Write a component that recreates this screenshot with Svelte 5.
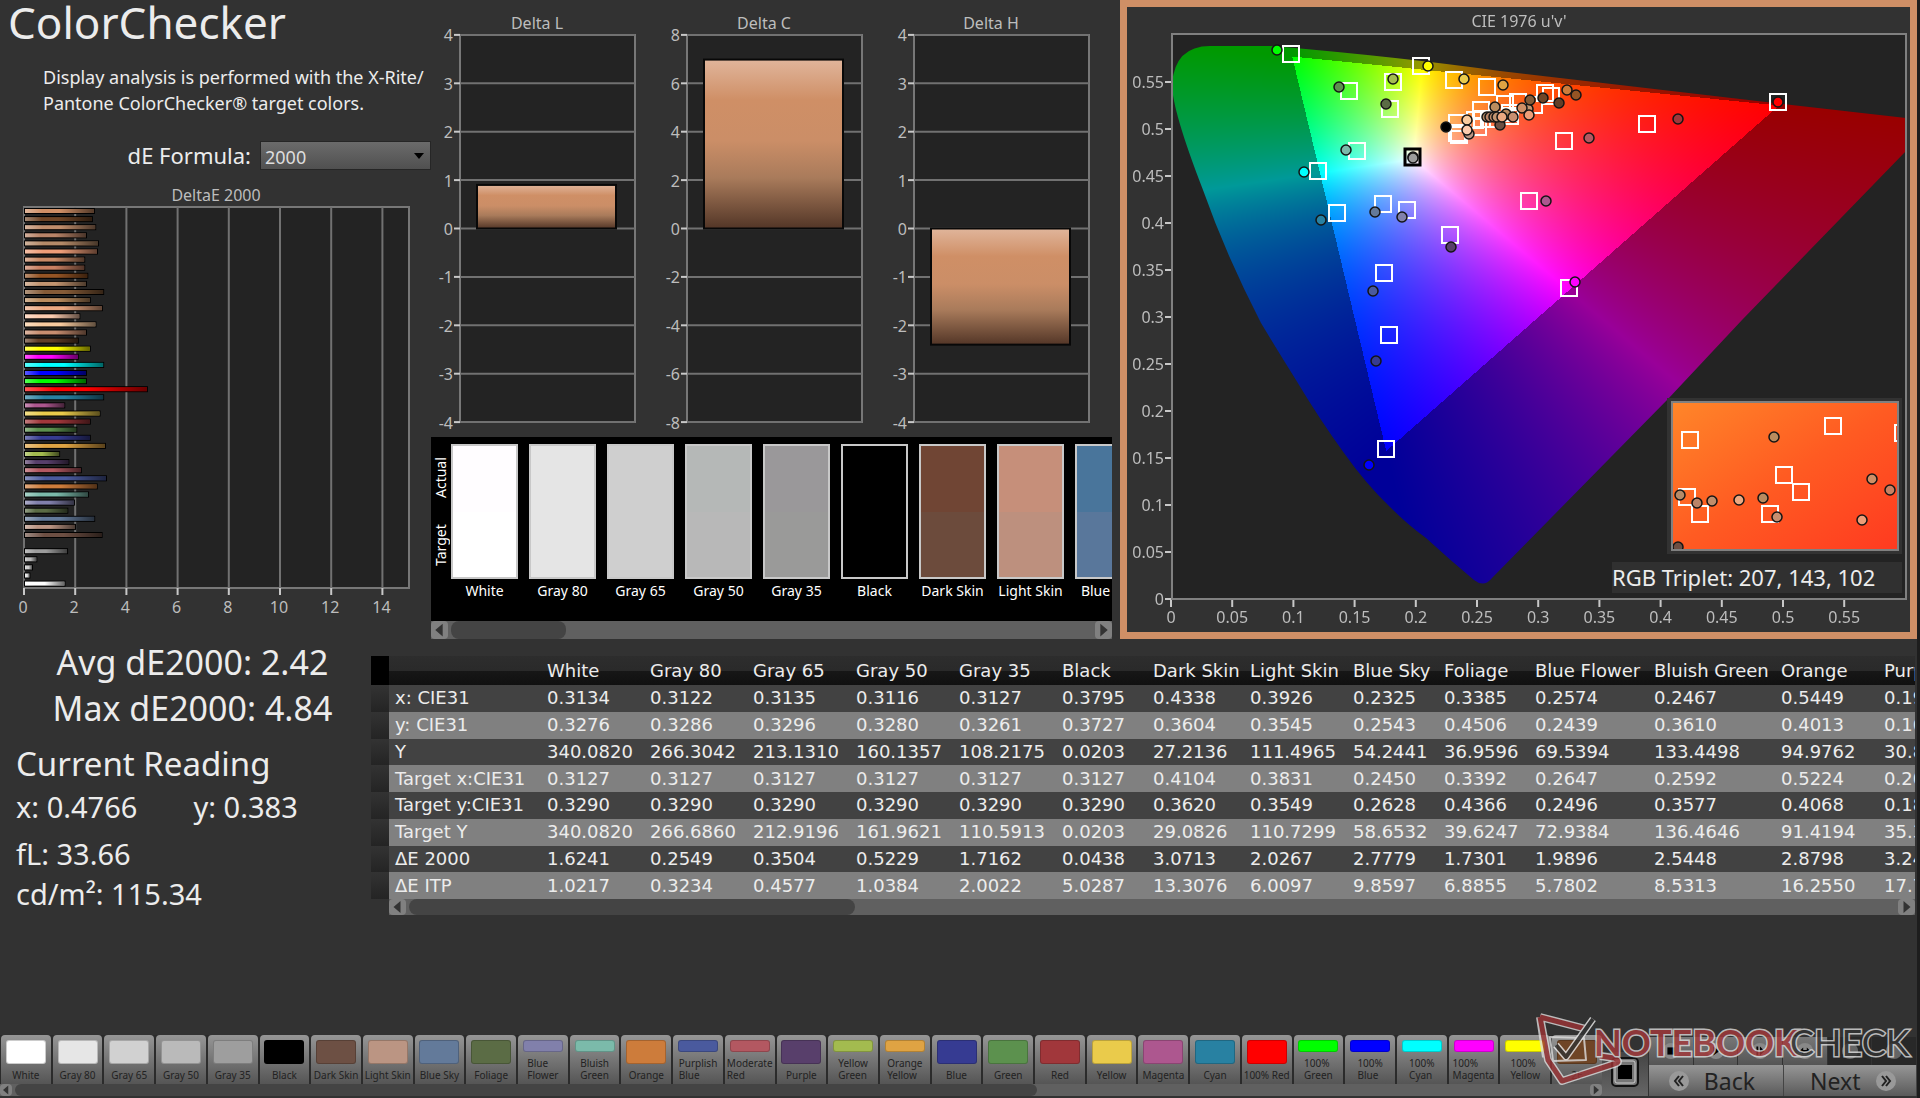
<script>
    import { onMount } from 'svelte';

    let canvas;

    const deltas = [
        { title: 'Delta L', step: 1, value: 0.9 },
        { title: 'Delta C', step: 2, value: 6.98 },
        { title: 'Delta H', step: 1, value: -2.4 }
    ];
    const levels = [4, 3, 2, 1, 0, -1, -2, -3, -4];

    // [deltaE, colour], top to bottom
    const deBars = [
        [2.77, '#cf8f66'], [2.69, '#6f4526'], [2.82, '#c08d6b'], [2.46, '#b98468'],
        [2.93, '#b48a68'], [2.89, '#ee9d78'], [2.39, '#c98a66'], [2.39, '#c98062'],
        [2.51, '#955424'], [2.46, '#c39570'], [3.13, '#855b37'], [2.61, '#ba8c5e'],
        [3.08, '#eca982'], [2.2, '#fccbae'], [2.83, '#f8cb9f'], [2.46, '#c88e70'],
        [2.14, '#623e27'], [2.61, '#ffff00'], [2.14, '#ff00ff'], [3.13, '#00ffff'],
        [2.46, '#0000ff'], [2.46, '#00ff00'], [4.84, '#ff0000'], [3.13, '#2881a2'],
        [1.61, '#ad578f'], [2.99, '#eacb4b'], [2.61, '#a1373b'], [2.08, '#5c914e'],
        [2.61, '#363b92'], [3.2, '#dfa343'], [1.41, '#a3bb4f'], [1.77, '#583f6b'],
        [2.26, '#b35861'], [3.24, '#4a5a9e'], [2.88, '#cd7c3b'], [2.54, '#7bbaaa'],
        [1.99, '#8180ab'], [1.73, '#5b6c45'], [2.78, '#637a9a'], [2.03, '#bb9583'],
        [3.07, '#6d4f43'], [0, '#000000'], [1.72, '#9c9c9c'], [0.52, '#b8b8b8'],
        [0.35, '#cfcfcf'], [0.25, '#e6e6e6'], [1.62, '#ffffff']
    ];

    const compare = [
        ['White', '#fffdff', '#ffffff'],
        ['Gray 80', '#e5e5e5', '#e5e5e5'],
        ['Gray 65', '#cfcfcf', '#cfcfcf'],
        ['Gray 50', '#b5b8b7', '#b8b8b8'],
        ['Gray 35', '#9a989a', '#9a9a99'],
        ['Black', '#000000', '#000000'],
        ['Dark Skin', '#704534', '#6c4b3c'],
        ['Light Skin', '#c68f7a', '#bd907e'],
        ['Blue Sky', '#49759b', '#59779b']
    ];

    const columns = ['White', 'Gray 80', 'Gray 65', 'Gray 50', 'Gray 35', 'Black', 'Dark Skin', 'Light Skin', 'Blue Sky', 'Foliage', 'Blue Flower', 'Bluish Green', 'Orange', 'Purplish Blue'];
    const rows = [
        ['x: CIE31', '0.3134', '0.3122', '0.3135', '0.3116', '0.3127', '0.3795', '0.4338', '0.3926', '0.2325', '0.3385', '0.2574', '0.2467', '0.5449', '0.19'],
        ['y: CIE31', '0.3276', '0.3286', '0.3296', '0.3280', '0.3261', '0.3727', '0.3604', '0.3545', '0.2543', '0.4506', '0.2439', '0.3610', '0.4013', '0.16'],
        ['Y', '340.0820', '266.3042', '213.1310', '160.1357', '108.2175', '0.0203', '27.2136', '111.4965', '54.2441', '36.9596', '69.5394', '133.4498', '94.9762', '30.8'],
        ['Target x:CIE31', '0.3127', '0.3127', '0.3127', '0.3127', '0.3127', '0.3127', '0.4104', '0.3831', '0.2450', '0.3392', '0.2647', '0.2592', '0.5224', '0.20'],
        ['Target y:CIE31', '0.3290', '0.3290', '0.3290', '0.3290', '0.3290', '0.3290', '0.3620', '0.3549', '0.2628', '0.4366', '0.2496', '0.3577', '0.4068', '0.18'],
        ['Target Y', '340.0820', '266.6860', '212.9196', '161.9621', '110.5913', '0.0203', '29.0826', '110.7299', '58.6532', '39.6247', '72.9384', '136.4646', '91.4194', '35.3'],
        ['ΔE 2000', '1.6241', '0.2549', '0.3504', '0.5229', '1.7162', '0.0438', '3.0713', '2.0267', '2.7779', '1.7301', '1.9896', '2.5448', '2.8798', '3.24'],
        ['ΔE ITP', '1.0217', '0.3234', '0.4577', '1.0384', '2.0022', '5.0287', '13.3076', '6.0097', '9.8597', '6.8855', '5.7802', '8.5313', '16.2550', '17.7']
    ];

    const patches = [
        ['White', '#ffffff'], ['Gray 80', '#e6e6e6'], ['Gray 65', '#d1d1d1'], ['Gray 50', '#bababa'],
        ['Gray 35', '#9e9e9e'], ['Black', '#000000'], ['Dark Skin', '#6d5044'], ['Light Skin', '#bb9583'],
        ['Blue Sky', '#637a9a'], ['Foliage', '#5b6c45'], ['Blue Flower', '#8180ab'], ['Bluish Green', '#7bbaaa'],
        ['Orange', '#cd7c3b'], ['Purplish Blue', '#4a5a9e'], ['Moderate Red', '#b35861'], ['Purple', '#583f6b'],
        ['Yellow Green', '#a3bb4f'], ['Orange Yellow', '#dfa343'], ['Blue', '#363b92'], ['Green', '#5c914e'],
        ['Red', '#a1373b'], ['Yellow', '#eacb4b'], ['Magenta', '#ad578f'], ['Cyan', '#2881a2'],
        ['100% Red', '#ff0000'], ['100% Green', '#00ff00'], ['100% Blue', '#0000ff'], ['100% Cyan', '#00ffff'],
        ['100% Magenta', '#ff00ff'], ['100% Yellow', '#ffff00'], ['2E', '#6f4526']
    ];
    const twoLines = (name) => name.includes(' ') && !/Gray|Skin|Sky|100% Red/.test(name);

    // chart units: 1224 px per u', 940 px per v'
    const ox = 1171;
    const oy = 599;
    const ticks = Array.from({ length: 12 }, (_, i) => i * 0.05);

    const targets = [
        [1291, 54], [1349, 91], [1393, 82], [1421, 66], [1454, 80], [1487, 87], [1390, 109],
        [1357, 151], [1318, 171], [1337, 213], [1383, 204], [1407, 210], [1450, 235], [1384, 273],
        [1389, 335], [1386, 449], [1457, 123], [1457, 133], [1459, 135], [1481, 110], [1475, 120],
        [1482, 119], [1478, 127], [1489, 119], [1505, 104], [1518, 102], [1510, 113], [1510, 116],
        [1545, 93], [1551, 96], [1534, 105], [1564, 141], [1647, 124], [1778, 102], [1529, 201], [1569, 288]
    ];
    const readings = [
        [1277, 50, '#00ff00'], [1339, 87, '#5c914e'], [1393, 79, '#a3bb4f'], [1428, 66, '#ffff00'],
        [1464, 79, '#eacb4b'], [1503, 85, '#dfa343'], [1386, 104, '#5b6c45'], [1446, 127, '#000000'],
        [1467, 120, '#f8cb9f'], [1469, 134, '#bb9583'], [1467, 130, '#fccbae'], [1495, 107, '#ba8c5e'],
        [1500, 125, '#6d4f43'], [1487, 117, '#b48a68'], [1490, 117, '#b98468'], [1494, 117, '#c08d6b'],
        [1497, 117, '#c39570'], [1506, 114, '#b98a5f'], [1502, 117, '#eca982'], [1513, 117, '#c88e70'],
        [1528, 109, '#c39570'], [1530, 100, '#855b37'], [1522, 108, '#cf8f66'], [1529, 115, '#ee9d78'],
        [1543, 98, '#6f4526'], [1559, 103, '#623e27'], [1567, 90, '#cd7c3b'], [1576, 95, '#955424'],
        [1589, 138, '#b35861'], [1678, 119, '#a1373b'], [1778, 102, '#ff0000'], [1546, 201, '#ad578f'],
        [1575, 282, '#ff00ff'], [1346, 150, '#7bbaaa'], [1304, 172, '#00ffff'], [1321, 220, '#2881a2'],
        [1375, 212, '#637a9a'], [1402, 217, '#8180ab'], [1451, 247, '#583f6b'], [1373, 291, '#4a5a9e'],
        [1376, 361, '#363b92'], [1369, 465, '#0000ff'], [1413, 157, '#8c8c8c'], [1413, 158, '#9c9c9c']
    ];
    const insetTargets = [[1690, 440], [1833, 426], [1903, 433], [1784, 475], [1801, 492], [1687, 497], [1700, 514], [1770, 514]];
    const insetReadings = [
        [1774, 437, '#ba8c5e'], [1872, 479, '#cf8f66'], [1890, 490, '#c98062'], [1680, 495, '#b48a68'],
        [1697, 503, '#b98468'], [1712, 501, '#c08d6b'], [1739, 500, '#eca982'], [1763, 498, '#b98a5f'],
        [1777, 517, '#c88e70'], [1862, 520, '#ee9d78'], [1678, 547, '#6d4f43']
    ];

    const locus = 'M1210 46 H1272 Q1400 57 1500 71 L1783 104 L1906 118 V151 L1742 320 L1668 399 L1492 578 Q1484 588 1474 580 Q1450 560 1426 538 Q1408 525 1390 507 Q1366 484 1344 453 Q1320 420 1296 380 Q1276 348 1261 323 Q1226 255 1203 190 Q1172 110 1172 84 Q1175 46 1210 46 Z';

    // Fills the u'v' diagram, dimmed outside the P3 triangle
    onMount(() => {
        const w = canvas.width;
        const h = canvas.height;
        const ctx = canvas.getContext('2d');
        const img = ctx.createImageData(w, h);
        for (let py = 0; py < h; py++) {
            for (let px = 0; px < w; px++) {
                const u = (px + 1127 - ox) / 1224;
                const v = Math.max((oy - py - 7) / 940, 0.005);
                const X = (9 * u) / (4 * v);
                const Z = (12 - 3 * u - 20 * v) / (4 * v);
                const rgb = [
                    2.4935 * X - 0.9314 - 0.4027 * Z,
                    -0.8295 * X + 1.7627 + 0.0236 * Z,
                    0.0358 * X - 0.0762 + 0.9569 * Z
                ];
                const k = 255 / Math.max(...rgb) * (Math.min(...rgb) < 0 ? 0.6 : 1);
                const i = (py * w + px) * 4;
                img.data[i] = Math.max(rgb[0], 0) * k;
                img.data[i + 1] = Math.max(rgb[1], 0) * k;
                img.data[i + 2] = Math.max(rgb[2], 0) * k;
                img.data[i + 3] = 255;
            }
        }
        ctx.putImageData(img, 0, 0);
        ctx.globalCompositeOperation = 'destination-in';
        ctx.translate(-1127, -7);
        ctx.fill(new Path2D(locus));
    });
</script>

{#snippet scrollbar(size)}
    <div class="scrollbar">
        <button aria-label="Scroll left"><svg viewBox="0 0 16 16"><path d="M11 2v12L4 8z" /></svg></button>
        <div class="track"><div class="thumb" style="width: {size}%"></div></div>
        <button aria-label="Scroll right"><svg viewBox="0 0 16 16"><path d="M5 2v12l7-6z" /></svg></button>
    </div>
{/snippet}

<main>
    <div class="top">
        <section class="left">
            <h1>ColorChecker</h1>
            <p class="intro">Display analysis is performed with the X-Rite/<br />Pantone ColorChecker® target colors.</p>
            <div class="formula">
                <label for="formula">dE Formula:</label>
                <div class="select">
                    <select id="formula"><option>2000</option></select>
                    <svg viewBox="0 0 12 8"><path d="M1 1h10L6 7z" /></svg>
                </div>
            </div>
            <svg class="chart" viewBox="0 170 431 450">
                <defs>
                    <linearGradient id="shineX">
                        <stop offset="0" stop-color="#fff" stop-opacity=".35" />
                        <stop offset=".25" stop-color="#fff" stop-opacity="0" />
                        <stop offset=".5" stop-color="#000" stop-opacity="0" />
                        <stop offset="1" stop-color="#000" stop-opacity=".6" />
                    </linearGradient>
                </defs>
                <text x="216" y="201" text-anchor="middle">DeltaE 2000</text>
                <rect class="plot" x="24" y="207" width="385" height="381" />
                {#each [0, 2, 4, 6, 8, 10, 12, 14] as n}
                    <path class="grid" d="M{24 + n * 25.6} 207V588" />
                    <path class="tick" d="M{24 + n * 25.6} 588v7" />
                    <text x={23 + n * 25.6} y="613" text-anchor="middle">{n}</text>
                {/each}
                {#each deBars as [value, color], i}
                    {#if value}
                        <rect x="24" y={208 + i * 8.1} width={value * 25.6} height="6" fill="#000" />
                        <rect x="25" y={209 + i * 8.1} width={value * 25.6 - 2} height="4" fill={color} />
                        <rect x="25" y={209 + i * 8.1} width={value * 25.6 - 2} height="4" fill="url(#shineX)" />
                    {/if}
                {/each}
            </svg>
        </section>

        <section class="middle">
            <div class="deltas">
                {#each deltas as { title, step, value }}
                    <svg class="chart" viewBox="0 0 227 437">
                        <defs>
                            <linearGradient id="copper" x2="0" y2="1">
                                <stop offset="0" stop-color="#e0b59b" />
                                <stop offset=".24" stop-color="#cf8f66" />
                                <stop offset=".48" stop-color="#cb8e67" />
                                <stop offset=".7" stop-color="#a97b5b" />
                                <stop offset="1" stop-color="#533627" />
                            </linearGradient>
                        </defs>
                        <text x="103" y="29" text-anchor="middle">{title}</text>
                        <rect class="plot" x="26" y="35" width="175" height="387" />
                        {#each levels as n}
                            <path class="grid" d="M26 {228.5 - n * 48.4}H201" />
                            <path class="tick" d="M20 {228.5 - n * 48.4}h6" />
                            <text x="19" y={235 - n * 48.4} text-anchor="end">{n * step}</text>
                        {/each}
                        <rect
                            class="bar"
                            x="43"
                            y={228.5 - Math.max(value / step, 0) * 48.4}
                            width="139"
                            height={Math.abs(value / step) * 48.4}
                        />
                    </svg>
                {/each}
            </div>
            <div class="compare">
                <div class="sides"><span>Actual</span><span>Target</span></div>
                {#each compare as [name, actual, target]}
                    <figure>
                        <div class="pair">
                            <div style="background: {actual}"></div>
                            <div style="background: {target}"></div>
                        </div>
                        <figcaption>{name}</figcaption>
                    </figure>
                {/each}
            </div>
            {@render scrollbar(18)}
        </section>

        <section class="cie">
            <canvas bind:this={canvas} width="783" height="625"></canvas>
            <svg class="chart" viewBox="1127 7 783 625">
                <defs>
                    <linearGradient id="hot" x2="1" y2="1">
                        <stop offset="0" stop-color="#ff8629" />
                        <stop offset=".5" stop-color="#ff5b22" />
                        <stop offset="1" stop-color="#ff3a20" />
                    </linearGradient>
                    <clipPath id="insetClip"><rect x="1672" y="402" width="226" height="148" /></clipPath>
                </defs>
                <text x="1519" y="27" text-anchor="middle">CIE 1976 u'v'</text>
                <rect class="frame" x="1172" y="34" width="734" height="565" />
                {#each ticks as t}
                    <path class="tick" d="M{ox + t * 1224} 600v7M1165 {oy - t * 940}h6" />
                    <text x={ox + t * 1224} y="623" text-anchor="middle">{+t.toFixed(2)}</text>
                    <text x="1164" y={oy + 6 - t * 940} text-anchor="end">{+t.toFixed(2)}</text>
                {/each}
                {#each targets as [x, y]}
                    <rect class="target" x={x - 8} y={y - 8} width="16" height="16" />
                {/each}
                <rect class="target white-point" x="1405" y="149" width="15" height="16" />
                {#each readings as [x, y, color]}
                    <circle cx={x} cy={y} r="5" fill={color} />
                {/each}
                <rect x="1667" y="398" width="235" height="156" fill="#323232" />
                <rect x="1672" y="402" width="226" height="148" fill="url(#hot)" />
                <g clip-path="url(#insetClip)">
                    {#each insetTargets as [x, y]}
                        <rect class="target" x={x - 8} y={y - 8} width="16" height="16" />
                    {/each}
                    {#each insetReadings as [x, y, color]}
                        <circle cx={x} cy={y} r="5" fill={color} />
                    {/each}
                </g>
                <rect class="frame" x="1672" y="402" width="226" height="148" />
                <rect x="1612" y="562" width="290" height="31" fill="#303030" />
                <text class="triplet" x="1612" y="586">RGB Triplet: 207, 143, 102</text>
            </svg>
        </section>
    </div>

    <div class="lower">
        <section class="stats">
            <p class="big">Avg dE2000: 2.42</p>
            <p class="big">Max dE2000: 4.84</p>
            <h2>Current Reading</h2>
            <div class="xy"><span>x: 0.4766</span><span>y: 0.383</span></div>
            <p class="fl">fL: 33.66</p>
            <p>cd/m²: 115.34</p>
        </section>

        <section class="data">
            <table>
                <colgroup>
                    <col class="w18" /><col class="w152" />
                    <col class="w103" /><col class="w103" /><col class="w103" /><col class="w103" /><col class="w103" />
                    <col class="w91" /><col class="w97" /><col class="w103" /><col class="w91" /><col class="w91" />
                    <col class="w119" /><col class="w127" /><col class="w103" /><col />
                </colgroup>
                <thead>
                    <tr>
                        <td class="strip"></td>
                        <th></th>
                        {#each columns as name}<th scope="col">{name}</th>{/each}
                    </tr>
                </thead>
                <tbody>
                    {#each rows as [name, ...values]}
                        <tr>
                            <td class="strip"></td>
                            <th scope="row">{name}</th>
                            {#each values as value}<td>{value}</td>{/each}
                        </tr>
                    {/each}
                </tbody>
            </table>
            <div class="data-scroll">{@render scrollbar(30)}</div>
        </section>
    </div>

    <footer>
        <div class="patches">
            <div class="strip-row">
                {#each patches as [name, color]}
                    <button class="patch">
                        <span class="chip" style="background-color: {color}"></span>
                        <span class="name" class:two={twoLines(name)}>{name}</span>
                    </button>
                {/each}
            </div>
            <div class="mini">{@render scrollbar(65)}</div>
        </div>
        <button class="stop" aria-label="Stop">
            <svg viewBox="0 0 30 32"><rect x="2" y="2" width="26" height="28" rx="4" fill="#777" stroke="#111" stroke-width="2" /><rect x="5" y="5" width="20" height="22" rx="2" fill="none" stroke="#ccc" /><rect x="8" y="9" width="14" height="14" fill="#000" /></svg>
        </button>
        <div class="nav">
            <div class="tools">
                <button aria-label="Record"><svg viewBox="0 0 20 20"><circle cx="10" cy="10" r="9" /><path d="M6 6h8v8H6z" /></svg></button>
                <button aria-label="Play"><svg viewBox="0 0 20 20"><circle cx="10" cy="10" r="9" /><path d="M7 5l7 5-7 5z" /></svg></button>
                <button aria-label="Step"><svg viewBox="0 0 20 20"><circle cx="10" cy="10" r="9" /><path d="M6 5h2v10H6zM10 5l5 5-5 5z" /></svg></button>
                <button aria-label="Loop"><svg viewBox="0 0 20 20"><circle cx="10" cy="10" r="9" /><path d="M4 10l4-4v3h4V6l4 4-4 4v-3H8v3z" /></svg></button>
                <button class="off" aria-label="Previous"><svg viewBox="0 0 20 20"><circle cx="10" cy="10" r="9" /></svg></button>
                <button class="off" aria-label="Following"><svg viewBox="0 0 20 20"><circle cx="10" cy="10" r="9" /></svg></button>
            </div>
            <div class="steps">
                <button><svg viewBox="0 0 20 20"><circle cx="10" cy="10" r="10" /><path d="M10 5l-4 5 4 5M14 5l-4 5 4 5" /></svg>Back</button>
                <button>Next<svg viewBox="0 0 20 20"><circle cx="10" cy="10" r="10" /><path d="M6 5l4 5-4 5M10 5l4 5-4 5" /></svg></button>
            </div>
        </div>
        <svg class="brand" viewBox="0 0 385 80">
            <g fill="none" stroke-linejoin="round">
                <path d="M10 7L16 47M10 7L56 19M10 7L18 50L32 71L84 54Q92 52 84 48L70 46" stroke="#ddd" stroke-width="8" />
                <path d="M10 7L56 19M10 7L18 50L32 71L84 54Q92 52 84 48L70 46" stroke="#9c3335" stroke-width="5" />
                <path d="M20 27L54 28L56 50L23 51Z" stroke="#ddd" stroke-width="2" />
                <path d="M26 35L36 47L63 9" stroke="#eee" stroke-width="7" />
                <path d="M26 35L36 47L63 9" stroke="#333" stroke-width="4" />
            </g>
            <text x="64" y="46" class="note">NOTEBOOK</text>
            <text x="260" y="46" class="check">CHECK</text>
        </svg>
    </footer>
</main>

<style>
    :global(body) {
        background: #323232;
    }

    main {
        min-height: 100vh;
        display: flex;
        flex-direction: column;
        box-sizing: border-box;
        overflow: hidden;
        background: #323232;
        border-right: 3px solid #1d1d1d;
        color: #ececec;
        font-family: "Noto Sans", sans-serif;
    }

    h1, h2, p, figure {
        margin: 0;
        font-weight: 400;
    }

    button {
        padding: 0;
        border: 0;
        font-family: inherit;
        color: #222;
    }

    .top {
        display: grid;
        grid-template-columns: 431fr 689fr 797fr;
        align-items: start;
    }

    .top > section {
        min-width: 0;
    }

    h1 {
        padding-left: 8px;
        font-size: 44px;
        line-height: 44px;
    }

    .intro {
        margin: 20px 0 25px 43px;
        font-size: 18px;
        line-height: 26px;
        white-space: nowrap;
    }

    .formula {
        display: flex;
        justify-content: flex-end;
        gap: 9px;
        font-size: 22px;
        line-height: 29px;
    }

    .select {
        position: relative;
        width: 171px;
    }

    .select svg {
        position: absolute;
        right: 6px;
        top: 11px;
        width: 12px;
    }

    select {
        width: 100%;
        height: 29px;
        padding: 3px 0 0 4px;
        appearance: none;
        border: 1px solid #262626;
        border-radius: 0;
        background: linear-gradient(#6b6b6b, #505050);
        color: #ddd;
        font-family: inherit;
        font-size: 18px;
    }

    .chart {
        display: block;
        width: 100%;
        font-size: 16px;
        fill: #bdbdbd;
    }

    .plot {
        fill: #232323;
        stroke: #777;
        stroke-width: 2;
    }

    .frame {
        fill: none;
        stroke: #808080;
        stroke-width: 2;
    }

    .grid {
        stroke: #717171;
        stroke-width: 2;
    }

    .tick {
        stroke: #c8c8c8;
        stroke-width: 2;
    }

    .bar {
        fill: url(#copper);
        stroke: #080808;
        stroke-width: 2;
    }

    .middle {
        padding-right: 8px;
    }

    .deltas {
        display: grid;
        grid-template-columns: repeat(3, 1fr);
        margin-right: -8px;
        padding: 0 5px 0 3px;
    }

    .compare {
        display: flex;
        gap: 11px;
        height: 184px;
        overflow: hidden;
        background: #000;
        color: #fff;
    }

    .sides {
        display: flex;
        flex-direction: row-reverse;
        justify-content: space-around;
        align-items: center;
        flex: none;
        width: 20px;
        height: 135px;
        margin: 7px -11px 0 0;
        writing-mode: vertical-rl;
        transform: rotate(180deg);
        font-size: 14px;
        line-height: 20px;
    }

    figure {
        flex: none;
        width: 67px;
        padding-top: 7px;
    }

    .pair {
        height: 135px;
        box-sizing: border-box;
        border: 2px solid #c8c8c8;
        display: grid;
    }

    figcaption {
        font-size: 14px;
        line-height: 24px;
        text-align: center;
        white-space: nowrap;
    }

    .scrollbar {
        display: flex;
        gap: 3px;
        height: 18px;
        background: #606060;
    }

    .scrollbar button {
        width: 17px;
        border-radius: 4px;
        background: #808080;
    }

    .scrollbar svg {
        display: block;
        width: 100%;
        height: 100%;
        fill: #333;
    }

    .track {
        flex: 1;
    }

    .thumb {
        height: 100%;
        border-radius: 8px;
        background: #444;
    }

    .cie {
        position: relative;
        border: 7px solid #cf8f66;
        background: linear-gradient(#232323, #232323) 45px 27px / 734px 565px no-repeat #323232;
    }

    canvas {
        position: absolute;
        left: 0;
        top: 0;
        width: 100%;
    }

    .cie .chart {
        position: relative;
    }

    .target {
        fill: none;
        stroke: #fff;
        stroke-width: 2;
    }

    .white-point {
        stroke: #000;
        stroke-width: 3;
    }

    circle {
        stroke: #151515;
        stroke-width: 1.5;
    }

    .triplet {
        font-size: 22px;
        fill: #ececec;
    }

    .lower {
        display: grid;
        grid-template-columns: 371px 1fr;
    }

    .stats {
        padding-left: 14px;
        font-size: 29px;
        line-height: 40px;
    }

    .stats > * {
        padding-left: 2px;
    }

    .stats .big {
        padding: 0;
        font-size: 34px;
        line-height: 46px;
        text-align: center;
    }

    h2 {
        margin-top: 13px;
        font-size: 33px;
    }

    .xy {
        display: grid;
        grid-template-columns: 1fr 1fr;
        margin: 3px 0 7px;
    }

    .data {
        min-width: 0;
        overflow: hidden;
        margin: 17px 2px 0 0;
    }

    table {
        width: 100%;
        height: 243px;
        table-layout: fixed;
        border-collapse: collapse;
        font-family: "DejaVu Sans", sans-serif;
        font-size: 18px;
        line-height: 24px;
    }

    th, td {
        padding: 0 0 0 6px;
        overflow: hidden;
        font-weight: 400;
        text-align: left;
        white-space: nowrap;
    }

    thead tr {
        height: 29px;
        background: linear-gradient(#2d2d2d, #2a2a2a 50%, #171717 50%, #101010);
    }

    thead .strip {
        background: #000;
    }

    tbody tr {
        background: #424242;
    }

    tbody tr:nth-child(even) {
        background: #808080;
    }

    tbody .strip {
        background: linear-gradient(#333, #242424);
    }

    .w18 { width: 18px; }
    .w91 { width: 91px; }
    .w97 { width: 97px; }
    .w103 { width: 103px; }
    .w119 { width: 119px; }
    .w127 { width: 127px; }
    .w152 { width: 152px; }

    .data-scroll {
        margin-left: 18px;
    }

    .data-scroll .scrollbar {
        height: 16px;
    }

    footer {
        position: relative;
        display: flex;
        margin-top: auto;
        padding-bottom: 2px;
    }

    .patches {
        flex: 1;
        min-width: 0;
        align-self: flex-end;
    }

    .strip-row {
        display: flex;
        gap: 2px;
        padding-left: 1px;
        background: #2b2b2b;
    }

    .patch {
        flex: 1;
        min-width: 0;
        height: 49px;
        padding-top: 5px;
        display: flex;
        flex-direction: column;
        align-items: center;
        border-radius: 4px 4px 0 0;
        background: linear-gradient(#969696, #555);
        font-size: 10px;
        line-height: 12px;
    }

    .chip {
        flex: 1;
        width: 40px;
        box-sizing: border-box;
        border-radius: 3px;
        border: 1px solid #0003;
    }

    .name {
        padding: 5px 0 3px;
        white-space: nowrap;
    }

    .two {
        width: min-content;
        white-space: normal;
        text-align: left;
    }

    .mini .scrollbar {
        height: 12px;
    }

    .mini button {
        width: 12px;
    }

    .stop {
        width: 46px;
        height: 44px;
        align-self: flex-end;
        background: linear-gradient(#444, #666);
    }

    .stop svg {
        width: 30px;
    }

    .nav {
        width: 268px;
        align-self: flex-end;
        margin-left: 1px;
    }

    .tools, .steps {
        display: flex;
    }

    .tools button {
        width: 45px;
        height: 28px;
        border-right: 1px solid #333;
        background: linear-gradient(#777, #555);
    }

    .tools .off {
        background: #222;
        opacity: 0.6;
    }

    .tools svg {
        width: 18px;
        display: block;
        margin: auto;
    }

    .tools circle {
        fill: #888;
        stroke: none;
    }

    .steps button {
        flex: 1;
        height: 31px;
        display: flex;
        align-items: center;
        justify-content: space-between;
        padding: 0 28px 0 20px;
        border-right: 1px solid #444;
        background: linear-gradient(#969696, #5a5a5a);
        font-size: 23px;
    }

    .steps button:last-child {
        padding: 0 20px 0 26px;
    }

    .steps svg {
        width: 20px;
        fill: none;
        stroke: #222;
        stroke-width: 2;
    }

    .steps circle {
        fill: #999;
        stroke: none;
    }

    .brand {
        position: absolute;
        right: 2px;
        bottom: 8px;
        width: 385px;
        opacity: 0.8;
        pointer-events: none;
        font-family: Lato, sans-serif;
        font-size: 36px;
        paint-order: stroke;
        stroke: #ddd;
        stroke-width: 3;
    }

    .note {
        font-weight: 700;
        fill: #a5393b;
    }

    .check {
        fill: #333;
    }
</style>
